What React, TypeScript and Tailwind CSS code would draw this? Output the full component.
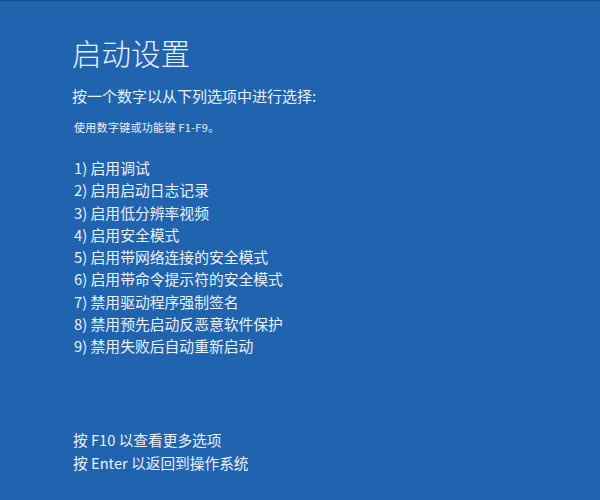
import React from "react";

const options = [
  "启用调试",
  "启用启动日志记录",
  "启用低分辨率视频",
  "启用安全模式",
  "启用带网络连接的安全模式",
  "启用带命令提示符的安全模式",
  "禁用驱动程序强制签名",
  "禁用预先启动反恶意软件保护",
  "禁用失败后自动重新启动",
];

const font = {
  fontFamily: '"Noto Sans CJK SC", "Noto Sans", "Liberation Sans", sans-serif',
};

const App: React.FC = () => {
  return (
    <div
      className="flex h-[500px] w-[600px] flex-col border-t border-[#1a4c8c] bg-[#2064b0] pl-[72px] pb-[26px] text-[#eaf0f8]"
      style={font}
    >
      <h1 className="mt-[33px] text-[29.5px] font-light leading-[36px]">启动设置</h1>
      <p className="mt-[15px] text-[15px] leading-[22px]">按一个数字以从下列选项中进行选择:</p>
      <p className="mt-[12px] pl-[2px] text-[11px] leading-[16px] tracking-[0.3px]">使用数字键或功能键 F1-F9。</p>

      <ul className="mt-[22px] pl-[2px]">
        {options.map((item, i) => (
          <li key={item} className="text-[14.8px] leading-[22.25px]">
            {i + 1}) {item}
          </li>
        ))}
      </ul>

      <div className="mt-auto pl-[1px] text-[14.7px] leading-[23px]">
        <p>按 F10 以查看更多选项</p>
        <p>按 Enter 以返回到操作系统</p>
      </div>
    </div>
  );
};

export default App;
